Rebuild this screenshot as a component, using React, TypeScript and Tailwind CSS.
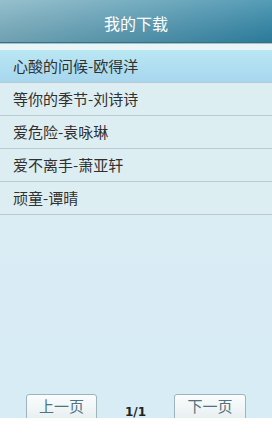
import React from "react";

const songs = [
  "心酸的问候-欧得洋",
  "等你的季节-刘诗诗",
  "爱危险-袁咏琳",
  "爱不离手-萧亚轩",
  "顽童-谭晴",
];

export default function App() {
  const font = { fontFamily: '"Noto Sans CJK SC", "DejaVu Sans", sans-serif' };
  return (
    <div className="w-[272px] h-[435px] bg-white overflow-hidden" style={font}>
      <div className="h-[418px] flex flex-col overflow-hidden bg-gradient-to-b from-[#dcedf4] to-[#d8ecf5]">
        <div className="relative h-[42px] shrink-0 flex items-center justify-center pt-[4px] bg-gradient-to-r from-[#7fb2c2] via-[#5a9db4] to-[#2f86a6]">
          <div className="absolute inset-0 bg-gradient-to-b from-[rgba(255,255,255,0.18)] to-[rgba(0,40,60,0.12)]" />
          <span className="relative text-white text-[16px] leading-none">我的下载</span>
        </div>
        <div className="h-[1px] shrink-0 bg-[#3d6f80]" />
        <div className="h-[1px] shrink-0 bg-[#9cc4d0]" />
        <div className="h-[6px] shrink-0 bg-[#eaf5f8]" />
        <div className="flex flex-col">
          {songs.map((s, i) => (
            <div
              key={s}
              className={
                "h-[33px] flex items-center pl-[13px] border-b border-[#b9cbd2] text-[15px] text-[#303030] " +
                (i === 0
                  ? "bg-gradient-to-b from-[#b9e7f2] to-[#a7d7ef]"
                  : "bg-[#ddeef3]")
              }
            >
              {s}
            </div>
          ))}
        </div>
        <div className="flex-1" />
        <div className="h-[24px] shrink-0 flex items-start">
          <div className="ml-[26px] w-[71px] h-[28px] flex items-start justify-center pt-[2px] border border-[#9fb3ba] rounded-[3px] bg-gradient-to-b from-[#fbfdfd] to-[#e6eef0] text-[15px] leading-[18px] text-[#4f7380]">
            上一页
          </div>
          <div className="w-[77px] flex justify-center pt-[9px] text-[12px] font-bold text-[#222]" style={{ fontFamily: '"DejaVu Sans", sans-serif' }}>
            1/1
          </div>
          <div className="w-[72px] h-[28px] flex items-start justify-center pt-[2px] border border-[#9fb3ba] rounded-[3px] bg-gradient-to-b from-[#fbfdfd] to-[#e6eef0] text-[15px] leading-[18px] text-[#4f7380]">
            下一页
          </div>
        </div>
      </div>
    </div>
  );
}
